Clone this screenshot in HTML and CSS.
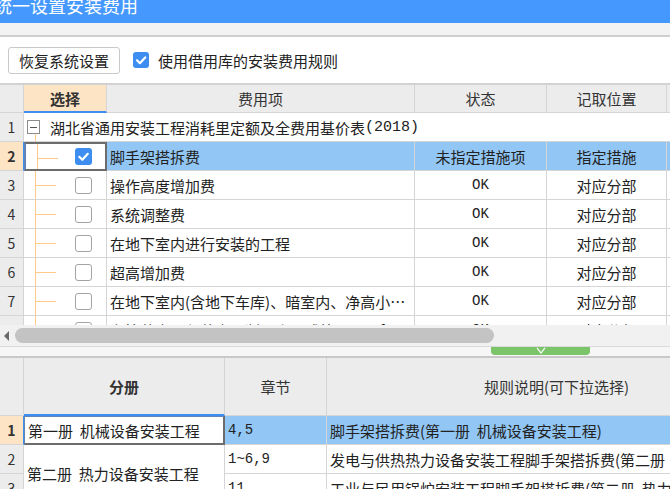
FILE: index.html
```html
<!DOCTYPE html>
<html lang="zh-CN">
<head>
<meta charset="utf-8">
<title>统一设置安装费用</title>
<link rel="stylesheet" href="styles.css">
</head>
<body>
<div class="title"><div class="title-text">统一设置安装费用</div></div>
<div class="band"></div>
<div class="toolbar">
  <button class="btn">恢复系统设置</button>
  <span class="cb cb-on cb-tool"><svg viewBox="0 0 16 16" width="16" height="16"><path d="M4 8.3 L6.9 11.2 L12.2 5.4" fill="none" stroke="#fff" stroke-width="2.2" stroke-linecap="round" stroke-linejoin="round"/></svg></span>
  <span class="cb-label">使用借用库的安装费用规则</span>
</div>

<div class="grid-top">
  <div class="row head">
    <div class="c rn"></div>
    <div class="c hsel">选择</div>
    <div class="c center">费用项</div>
    <div class="c center">状态</div>
    <div class="c center">记取位置</div>
    <div class="c"></div>
  </div>
  <div class="row">
    <div class="c rn">1</div>
    <div class="c group"><span class="minus"></span>湖北省通用安装工程消耗里定额及全费用基价表<span class="mono big">(2018)</span></div>
  </div>
  <div class="row selrow">
    <div class="c rn rn-sel">2</div>
    <div class="c tree focus"><span class="cb cb-on"><svg viewBox="0 0 17 17" width="17" height="17"><path d="M4.3 8.8 L7.3 11.8 L12.8 5.8" fill="none" stroke="#fff" stroke-width="2.2" stroke-linecap="round" stroke-linejoin="round"/></svg></span></div>
    <div class="c txt">脚手架搭拆费</div>
    <div class="c center">未指定措施项</div>
    <div class="c center">指定措施</div>
    <div class="c"></div>
  </div>
  <div class="row">
    <div class="c rn">3</div>
    <div class="c tree"><span class="cb"></span></div>
    <div class="c txt">操作高度增加费</div>
    <div class="c center mono">OK</div>
    <div class="c center">对应分部</div>
    <div class="c"></div>
  </div>
  <div class="row">
    <div class="c rn">4</div>
    <div class="c tree"><span class="cb"></span></div>
    <div class="c txt">系统调整费</div>
    <div class="c center mono">OK</div>
    <div class="c center">对应分部</div>
    <div class="c"></div>
  </div>
  <div class="row">
    <div class="c rn">5</div>
    <div class="c tree"><span class="cb"></span></div>
    <div class="c txt">在地下室内进行安装的工程</div>
    <div class="c center mono">OK</div>
    <div class="c center">对应分部</div>
    <div class="c"></div>
  </div>
  <div class="row">
    <div class="c rn">6</div>
    <div class="c tree"><span class="cb"></span></div>
    <div class="c txt">超高增加费</div>
    <div class="c center mono">OK</div>
    <div class="c center">对应分部</div>
    <div class="c"></div>
  </div>
  <div class="row">
    <div class="c rn">7</div>
    <div class="c tree"><span class="cb"></span></div>
    <div class="c txt">在地下室内(含地下车库)、暗室内、净高小…</div>
    <div class="c center mono">OK</div>
    <div class="c center">对应分部</div>
    <div class="c"></div>
  </div>
  <div class="row">
    <div class="c rn">8</div>
    <div class="c tree"><span class="cb"></span></div>
    <div class="c txt">在管井内、竖井内、断面小于或等于2.0㎡…</div>
    <div class="c center mono">OK</div>
    <div class="c center">对应分部</div>
    <div class="c"></div>
  </div>
</div>

<div class="hscroll">
  <span class="arrow-left"></span>
  <span class="thumb"></span>
</div>
<div class="split">
  <span class="handle"><svg viewBox="0 0 10 7" width="10" height="7"><path d="M1 0.8 L5 6 L9 0.8" fill="none" stroke="#fff" stroke-width="1.2"/></svg></span>
</div>

<div class="grid-bottom">
  <div class="c rn"></div>
  <div class="c hsel2">分册</div>
  <div class="c center">章节</div>
  <div class="c center">规则说明(可下拉选择)</div>

  <div class="c rn rn-sel rn-b">1</div>
  <div class="c txt focus2">第一册&nbsp;&nbsp;机械设备安装工程</div>
  <div class="c txt sel mono">4,5</div>
  <div class="c txt sel">脚手架搭拆费(第一册&nbsp;&nbsp;机械设备安装工程)</div>

  <div class="c rn">2</div>
  <div class="c txt span2">第二册&nbsp;&nbsp;热力设备安装工程</div>
  <div class="c txt mono">1~6,9</div>
  <div class="c txt">发电与供热热力设备安装工程脚手架搭拆费(第二册&nbsp;&nbsp;热力设备安装工程)</div>

  <div class="c rn">3</div>
  <div class="c txt mono">11</div>
  <div class="c txt">工业与民用锅炉安装工程脚手架搭拆费(第二册&nbsp;&nbsp;热力设备安装工程)</div>
</div>
</body>
</html>
```

FILE: styles.css
```css
html, body {
  margin: 0;
  padding: 0;
}
body {
  width: 670px;
  height: 489px;
  overflow: hidden;
  background: #fff;
  color: #222;
  font-family: "Noto Sans CJK SC", "Noto Sans", sans-serif;
}

/* title bar */
.title {
  height: 23px;
  background: #4599fe;
  overflow: hidden;
  color: #fff;
}
.title-text {
  font-size: 18px;
  line-height: 18px;
  margin: -4px 0 0 -6px;
  white-space: nowrap;
}
.band {
  height: 12px;
  background: #f3f3f3;
  border-bottom: 2px solid #cfcfcf;
}

/* toolbar */
.toolbar {
  height: 48px;
  box-sizing: border-box;
  border-bottom: 2px solid #d2d2d2;
  display: flex;
  align-items: center;
  padding-left: 8px;
}
.btn {
  width: 112px;
  height: 27px;
  border: 1px solid #c9c9c9;
  border-radius: 3px;
  background: #fff;
  color: #222;
  font-family: "Noto Sans CJK SC", sans-serif;
  font-size: 15px;
  padding: 0;
  line-height: 25px;
}
.cb {
  display: inline-flex;
  width: 17px;
  height: 17px;
  box-sizing: border-box;
  border: 1px solid #a3a3a3;
  border-radius: 3px;
  background: #fff;
}
.cb-on {
  border: none;
  background: #3d8ef0;
}
.cb-tool {
  width: 16px;
  height: 16px;
  margin-left: 13px;
}
.cb-label {
  margin-left: 9px;
  font-size: 15px;
  color: #222;
}

/* grids */
.grid-top {
  height: 240px;
  overflow: hidden;
}
.row {
  display: grid;
  grid-template-columns: 24px 83px 308px 132px 120px 120px;
  height: 29px;
}
.row.head {
  height: 28px;
}
.c {
  box-sizing: border-box;
  border-right: 1px solid #d5d5d5;
  border-bottom: 1px solid #d5d5d5;
  display: flex;
  align-items: center;
  white-space: nowrap;
  overflow: hidden;
  font-size: 15px;
  color: #222;
  background-origin: border-box;
}
.head .c {
  background: #ececec;
  color: #333;
}
.center {
  justify-content: center;
}
.txt {
  padding-left: 3px;
}
.rn {
  justify-content: center;
  background: #ececec;
  color: #333;
  font-size: 14px;
}
.rn-sel {
  background: #fde4c4;
  font-weight: bold;
  border-right-color: #3d8ef0;
}
.head .hsel {
  background: #fde4c4;
  font-weight: bold;
  justify-content: center;
  border-bottom: 2px solid #3d8ef0;
}
.mono {
  font-family: "Liberation Mono", monospace;
  font-size: 14px;
  color: #222;
}
.big {
  font-size: 15px;
  color: #222;
}
.group {
  grid-column: 2 / -1;
  padding-left: 3px;
  background: linear-gradient(#ffc98a, #ffc98a) 11px 100% / 1px 8px no-repeat;
}
.minus {
  width: 13px;
  height: 14px;
  box-sizing: border-box;
  border: 1px solid #8c8c8c;
  margin-right: 10px;
  background: #fff linear-gradient(#555, #555) center / 7px 1px no-repeat;
  flex: none;
}
.tree {
  justify-content: flex-end;
  padding-right: 14px;
  background:
    linear-gradient(#ffc98a, #ffc98a) 11px 0 / 1px 29px no-repeat,
    linear-gradient(#ffc98a, #ffc98a) 11px 14px / 21px 1px no-repeat;
}
.focus {
  border: 2px solid #6c6c6c;
  border-left-color: #5f86b5;
  padding-right: 13px;
}
.selrow .c:nth-child(n+3) {
  background: #91c6f5;
}

/* horizontal scrollbar */
.hscroll {
  height: 21px;
  background: #f1f1f1;
  display: flex;
  align-items: center;
}
.arrow-left {
  width: 0;
  height: 0;
  margin-left: 4px;
  border-top: 5px solid transparent;
  border-bottom: 5px solid transparent;
  border-right: 5px solid #6a6a6a;
}
.thumb {
  margin-left: 6px;
  width: 479px;
  height: 15px;
  border-radius: 8px;
  background: #c3c3c3;
}
.split {
  height: 12px;
  box-sizing: border-box;
  background: #f6f6f6;
  border-top: 1px solid #d9d9d9;
  border-bottom: 2px solid #c8c8c8;
  display: flex;
  align-items: flex-start;
}
.handle {
  margin-left: 491px;
  width: 99px;
  height: 8px;
  background: #7cc46a;
  border-radius: 0 0 4px 4px;
  display: flex;
  justify-content: center;
  align-items: flex-start;
}
.handle svg {
  display: block;
}

/* bottom grid */
.grid-bottom {
  display: grid;
  grid-template-columns: 24px 201px 102px 460px;
  grid-template-rows: 58px 29px 29px 29px;
}
.grid-bottom > .c:nth-child(-n+4) {
  background: #ececec;
  color: #333;
}
.grid-bottom > .hsel2 {
  background: #fde4c4;
  color: #222;
  font-weight: bold;
  justify-content: center;
  border-bottom: 2px solid #3d8ef0;
}
.grid-bottom > .rn-b {
  background: #fde4c4;
}
.focus2 {
  border: 2px solid #6c6c6c;
  border-left: 1px solid #5f86b5;
  border-top: 1px solid #5f86b5;
  padding-left: 3px;
}
.sel {
  background: #91c6f5;
}
.span2 {
  grid-row: span 2;
}
```
